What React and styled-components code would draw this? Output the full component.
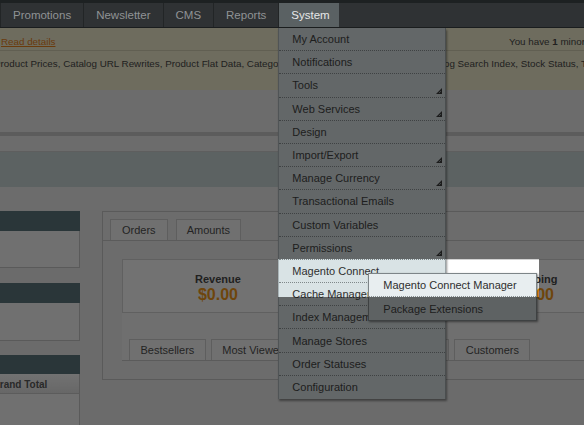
import React from "react";
import styled, { createGlobalStyle } from "styled-components";

const Global = createGlobalStyle`
  html, body { margin: 0; padding: 0; }
  body {
    width: 584px; height: 425px; overflow: hidden; background: #eeeeee;
    font-family: "Liberation Sans", Arial, Helvetica, sans-serif;
  }
  * { box-sizing: border-box; }
  ul { margin: 0; padding: 0; list-style: none; }
`;

const Page = styled.div`
  position: relative; width: 584px; height: 425px; overflow: hidden; background: #eeeeee;
`;

const Header = styled.header`
  height: 28px; padding-top: 3px; background: #1d2122; border-bottom: 1px solid #1a1d1e;
`;

const Nav = styled.ul`
  display: flex; height: 24px; background: #2f3234;
`;

const NavItem = styled.li`
  position: relative; display: flex; align-items: center;
  padding: ${p => (p.$active ? "0 9px 0 12px" : "0 12px")};
  border-left: 1px solid #222526;
  background: ${p => (p.$active ? "#5a6163" : "transparent")};
  color: ${p => (p.$active ? "#e6e8e8" : "#8f9395")};
  font-size: 11.5px; white-space: nowrap;
`;

const Dropdown = styled.ul`
  position: absolute; top: 25px; left: -1px; z-index: 10; width: 168px;
  background: #d9e3e5; border-left: 1px solid #aab5b8; border-right: 1px solid #9ba5a8;
  box-shadow: 1px 2px 2px rgba(0,0,0,0.45);
`;

const MenuItem = styled.li`
  position: relative; display: flex; align-items: center; height: 23.2px; padding-left: 13px;
  font-size: 11px; color: #2f2f2f; white-space: nowrap;
  border-bottom: ${p => (p.$last ? "none" : "1px dotted #7f888a")};
`;

const Arrow = styled.svg`
  position: absolute; right: 3px; bottom: 3px; width: 6px; height: 6px;
`;

const Submenu = styled.ul`
  position: absolute; top: 13px; left: 89px; z-index: 11; width: 169px;
  background: #cdd7da; border: 1px solid #7d8588;
  box-shadow: 1px 1px 2px rgba(0,0,0,0.5);
`;

const SubItem = styled.li`
  display: flex; align-items: center; height: 23.3px; padding-left: 14px;
  font-size: 11px; color: #2f2f2f; white-space: nowrap;
  background: ${p => (p.$hover ? "#e8eef0" : "transparent")};
  border-bottom: ${p => (p.$last ? "none" : "1px dotted #8a9294")};
`;

const Notice = styled.div`
  background: #f4efcc; color: #333; font-size: 9.8px; line-height: 12px; white-space: nowrap;
`;

const NoticeTop = styled.div`
  display: grid; grid-template-columns: 509px 1fr; height: 23px; padding-top: 8px;
  border-bottom: 1px solid #d4cfae; overflow: hidden;
`;

const ReadLink = styled.a`
  margin-left: 1px; color: #ea7601; text-decoration: underline;
`;

const NoticeBottom = styled.div`
  height: 39px; padding-top: 7px; overflow: hidden;
`;

const NoticeText = styled.span`
  display: block; margin-left: -6px;
`;

const HeadArea = styled.div`
  height: 121px; display: flex; flex-direction: column;
`;

const Band = styled.div`
  height: ${p => p.$h}px; background: ${p => p.$bg};
  border-bottom: ${p => (p.$line ? `1px solid ${p.$line}` : "none")};
`;

const Columns = styled.div`
  display: grid; grid-template-columns: 80px 540px; column-gap: 22px; align-items: start;
`;

const LeftCol = styled.div`
  display: flex; flex-direction: column;
`;

const SideBox = styled.div`
  margin-bottom: ${p => p.$mb || 0}px;
`;

const SideHead = styled.div`
  height: ${p => p.$h}px; background: #4c6a70;
`;

const SideBody = styled.div`
  height: ${p => p.$h}px; background: #fafafa;
  border-right: 1px solid #c3c3c3; border-bottom: 1px solid #c3c3c3;
`;

const GridHead = styled.div`
  height: 20px; display: flex; align-items: center; padding-top: 2px;
  background: linear-gradient(#ffffff, #e4e4e4); border-bottom: 1px solid #c9c9c9; border-right: 1px solid #c3c3c3;
  font-size: 10px; font-weight: bold; color: #4a4a4a; white-space: nowrap; overflow: hidden;
`;

const GridHeadText = styled.span`
  margin-left: -8px;
`;

const MainBox = styled.div`
  background: #f1f1f1; border: 1px solid #c2c2c2; height: 169px;
`;

const TabStrip = styled.div`
  display: flex; gap: ${p => p.$gap}px; padding: ${p => p.$pad};
  border-bottom: 1px solid #c6c6c6;
`;

const Tab = styled.div`
  height: 21px; display: flex; align-items: center; padding: 0 ${p => p.$px}px;
  background: #fbfbfb; border: 1px solid #cdcdcd; border-bottom: none;
  font-size: 11px; color: #3a3a3a; white-space: nowrap;
`;

const TotalsWrap = styled.div`
  padding: 18px 0 0 19px;
`;

const Totals = styled.div`
  display: grid; grid-template-columns: repeat(4, 158px); height: 54px; padding: 12px 0 0 16px;
  background: #ffffff; border: 1px solid #d2d2d2; border-right: none;
`;

const Total = styled.div`
  display: flex; flex-direction: column; align-items: center;
`;

const TotalLabel = styled.span`
  font-size: 11px; line-height: 14px; font-weight: bold; color: #333;
`;

const TotalValue = styled.span`
  font-size: 16px; line-height: 18px; font-weight: bold; color: #f59000;
`;

const GridSection = styled.div`
  margin-left: 19px; background: #f7f7f7;
`;

const OverlayLayer = styled.div`
  position: absolute; left: 0; right: 0; top: 28px; bottom: 0; overflow: hidden; z-index: 100;
  pointer-events: none;
`;

const Spotlight = styled.div`
  position: absolute; left: 278px; top: 231px; width: 261px; height: 38px;
  box-shadow: 0 0 0 2000px rgba(20, 20, 20, 0.6);
`;

const ArrowIcon = () => (
  <Arrow viewBox="0 0 6 6">
    <path d="M6 0 L6 6 L0 6 Z" fill="#2a2a2a" />
    <path d="M5 3 L3 5" stroke="#9aa" strokeWidth="0.8" />
  </Arrow>
);

const menu = [
  ["My Account"], ["Notifications"], ["Tools", 1], ["Web Services", 1], ["Design"],
  ["Import/Export", 1], ["Manage Currency", 1], ["Transactional Emails"], ["Custom Variables"],
  ["Permissions", 1], ["Magento Connect", 2], ["Cache Management"], ["Index Management"],
  ["Manage Stores"], ["Order Statuses"], ["Configuration"],
];

export default function App() {
  return (
    <Page>
      <Global />
      <Header>
        <Nav>
          <NavItem>Promotions</NavItem>
          <NavItem>Newsletter</NavItem>
          <NavItem>CMS</NavItem>
          <NavItem>Reports</NavItem>
          <NavItem $active>
            System
            <Dropdown>
              {menu.map(([label, kind], i) => (
                <MenuItem key={label} $last={i === menu.length - 1}>
                  {label}
                  {kind === 1 && <ArrowIcon />}
                  {kind === 2 && (
                    <Submenu>
                      <SubItem $hover>Magento Connect Manager</SubItem>
                      <SubItem $last>Package Extensions</SubItem>
                    </Submenu>
                  )}
                </MenuItem>
              ))}
            </Dropdown>
          </NavItem>
        </Nav>
      </Header>

      <Notice>
        <NoticeTop>
          <span><ReadLink>Read details</ReadLink></span>
          <span>You have <b>1</b> minor, 4 notice unread message(s).</span>
        </NoticeTop>
        <NoticeBottom>
          <NoticeText>
            Product Prices, Catalog URL Rewrites, Product Flat Data, Category Flat Data, Category Products, Catalog Search Index, Stock Status, Tag Aggregation Data.
          </NoticeText>
        </NoticeBottom>
      </Notice>

      <HeadArea>
        <Band $h={42} $bg="#f0f0f0" />
        <Band $h={4} $bg="#c8c8c8" />
        <Band $h={16} $bg="#f0f0f0" $line="#cdcdcd" />
        <Band $h={35} $bg="#c9d6d7" />
        <Band $h={23} $bg="#efefef" />
      </HeadArea>

      <Columns>
        <LeftCol>
          <SideBox $mb={15}>
            <SideHead $h={20} />
            <SideBody $h={37} />
          </SideBox>
          <SideBox $mb={14}>
            <SideHead $h={20} />
            <SideBody $h={38} />
          </SideBox>
          <SideBox>
            <SideHead $h={19} />
            <GridHead><GridHeadText>Grand Total</GridHeadText></GridHead>
            <SideBody $h={60} />
          </SideBox>
        </LeftCol>

        <MainBox>
          <TabStrip $gap={8} $pad="7px 0 0 7px">
            <Tab $px={11}>Orders</Tab>
            <Tab $px={10}>Amounts</Tab>
          </TabStrip>
          <TotalsWrap>
            <Totals>
              <Total><TotalLabel>Revenue</TotalLabel><TotalValue>$0.00</TotalValue></Total>
              <Total><TotalLabel>Tax</TotalLabel><TotalValue>$0.00</TotalValue></Total>
              <Total><TotalLabel>Shipping</TotalLabel><TotalValue>$0.00</TotalValue></Total>
              <Total><TotalLabel>Quantity</TotalLabel><TotalValue>0</TotalValue></Total>
            </Totals>
          </TotalsWrap>
          <GridSection>
            <TabStrip $gap={5} $pad="26px 0 0 7px">
              <Tab $px={10.5}>Bestsellers</Tab>
              <Tab $px={10.5}>Most Viewed Products</Tab>
              <Tab $px={10.5}>New Customers</Tab>
              <Tab $px={10.5}>Customers</Tab>
            </TabStrip>
          </GridSection>
        </MainBox>
      </Columns>

      <OverlayLayer>
        <Spotlight />
      </OverlayLayer>
    </Page>
  );
}
